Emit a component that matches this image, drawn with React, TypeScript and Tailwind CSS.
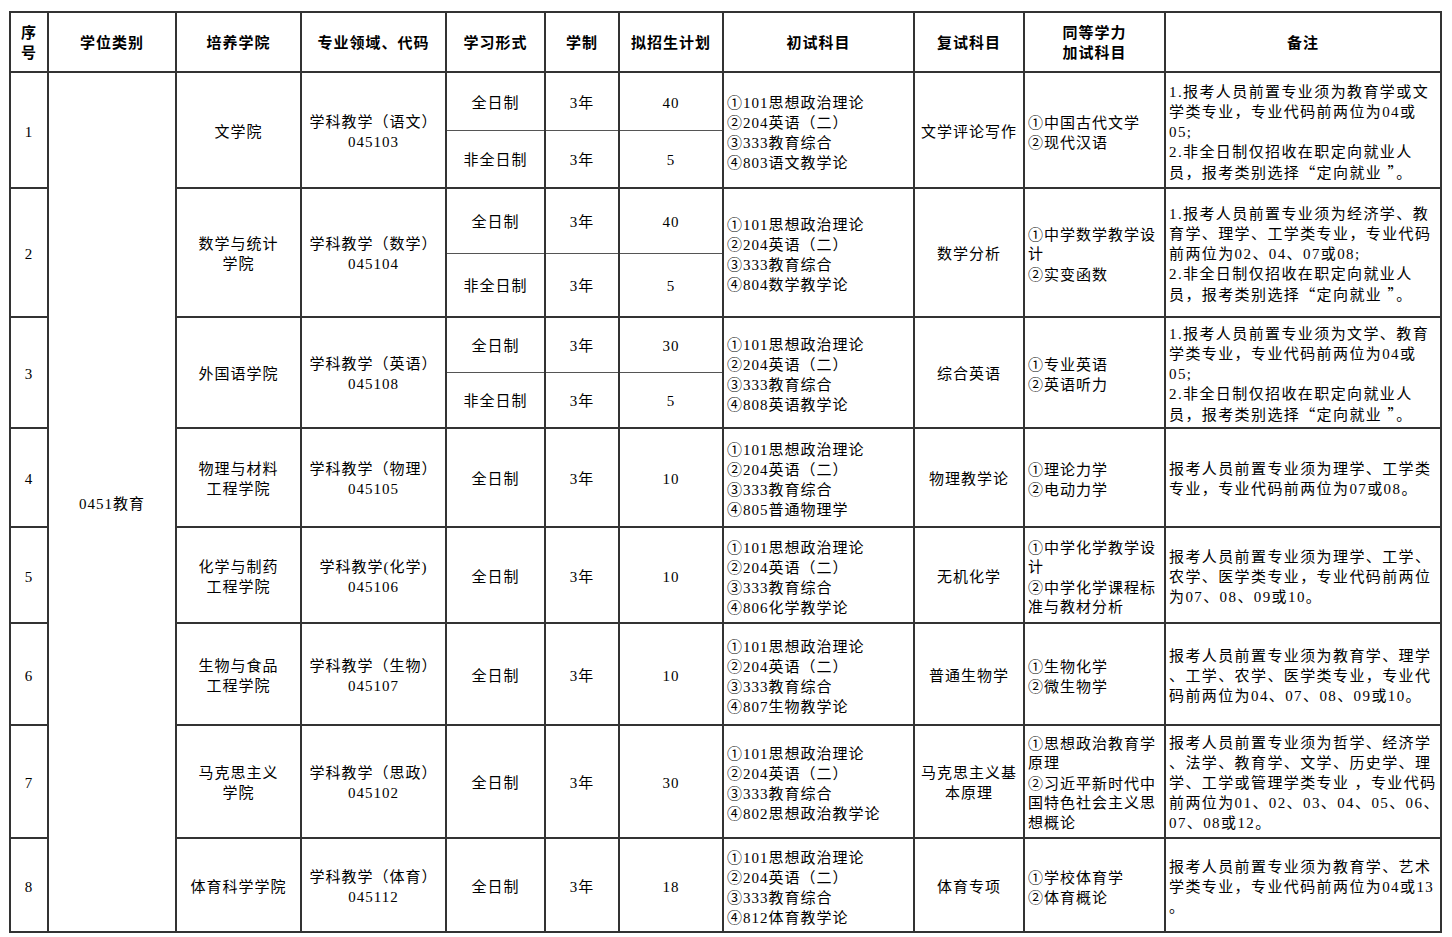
const font = { fontFamily: '"Liberation Serif", "Noto Sans CJK SC", serif' };

type Row = {
  no: string;
  college: string[];
  major: string[];
  forms: { form: string; years: string; plan: string }[];
  heights: number[];
  exam: string[];
  retest: string[];
  extra: string[];
  note: string[];
};

const exam = (code: string, subject: string) => [
  "①101思想政治理论",
  "②204英语（二）",
  "③333教育综合",
  `④${code}${subject}`,
];

const noteTail = ["2.非全日制仅招收在职定向就业人", "员，报考类别选择“定向就业 ”。"];

const rows: Row[] = [
  {
    no: "1",
    college: ["文学院"],
    major: ["学科教学（语文）", "045103"],
    forms: [
      { form: "全日制", years: "3年", plan: "40" },
      { form: "非全日制", years: "3年", plan: "5" },
    ],
    heights: [58, 58],
    exam: exam("803", "语文教学论"),
    retest: ["文学评论写作"],
    extra: ["①中国古代文学", "②现代汉语"],
    note: ["1.报考人员前置专业须为教育学或文", "学类专业，专业代码前两位为04或", "05;", ...noteTail],
  },
  {
    no: "2",
    college: ["数学与统计", "学院"],
    major: ["学科教学（数学）", "045104"],
    forms: [
      { form: "全日制", years: "3年", plan: "40" },
      { form: "非全日制", years: "3年", plan: "5" },
    ],
    heights: [65, 64],
    exam: exam("804", "数学教学论"),
    retest: ["数学分析"],
    extra: ["①中学数学教学设", "计", "②实变函数"],
    note: ["1.报考人员前置专业须为经济学、教", "育学、理学、工学类专业，专业代码", "前两位为02、04、07或08;", ...noteTail],
  },
  {
    no: "3",
    college: ["外国语学院"],
    major: ["学科教学（英语）", "045108"],
    forms: [
      { form: "全日制", years: "3年", plan: "30" },
      { form: "非全日制", years: "3年", plan: "5" },
    ],
    heights: [55, 56],
    exam: exam("808", "英语教学论"),
    retest: ["综合英语"],
    extra: ["①专业英语", "②英语听力"],
    note: ["1.报考人员前置专业须为文学、教育", "学类专业，专业代码前两位为04或", "05;", ...noteTail],
  },
  {
    no: "4",
    college: ["物理与材料", "工程学院"],
    major: ["学科教学（物理）", "045105"],
    forms: [{ form: "全日制", years: "3年", plan: "10" }],
    heights: [99],
    exam: exam("805", "普通物理学"),
    retest: ["物理教学论"],
    extra: ["①理论力学", "②电动力学"],
    note: ["报考人员前置专业须为理学、工学类", "专业，专业代码前两位为07或08。"],
  },
  {
    no: "5",
    college: ["化学与制药", "工程学院"],
    major: ["学科教学(化学)", "045106"],
    forms: [{ form: "全日制", years: "3年", plan: "10" }],
    heights: [96],
    exam: exam("806", "化学教学论"),
    retest: ["无机化学"],
    extra: ["①中学化学教学设", "计", "②中学化学课程标", "准与教材分析"],
    note: ["报考人员前置专业须为理学、工学、", "农学、医学类专业，专业代码前两位", "为07、08、09或10。"],
  },
  {
    no: "6",
    college: ["生物与食品", "工程学院"],
    major: ["学科教学（生物）", "045107"],
    forms: [{ form: "全日制", years: "3年", plan: "10" }],
    heights: [102],
    exam: exam("807", "生物教学论"),
    retest: ["普通生物学"],
    extra: ["①生物化学", "②微生物学"],
    note: ["报考人员前置专业须为教育学、理学", "、工学、农学、医学类专业，专业代", "码前两位为04、07、08、09或10。"],
  },
  {
    no: "7",
    college: ["马克思主义", "学院"],
    major: ["学科教学（思政）", "045102"],
    forms: [{ form: "全日制", years: "3年", plan: "30" }],
    heights: [113],
    exam: exam("802", "思想政治教学论"),
    retest: ["马克思主义基", "本原理"],
    extra: ["①思想政治教育学", "原理", "②习近平新时代中", "国特色社会主义思", "想概论"],
    note: [
      "报考人员前置专业须为哲学、经济学",
      "、法学、教育学、文学、历史学、理",
      "学、工学或管理学类专业 ，专业代码",
      "前两位为01、02、03、04、05、06、",
      "07、08或12。",
    ],
  },
  {
    no: "8",
    college: ["体育科学学院"],
    major: ["学科教学（体育）", "045112"],
    forms: [{ form: "全日制", years: "3年", plan: "18" }],
    heights: [94],
    exam: exam("812", "体育教学论"),
    retest: ["体育专项"],
    extra: ["①学校体育学", "②体育概论"],
    note: ["报考人员前置专业须为教育学、艺术", "学类专业，专业代码前两位为04或13", "。"],
  },
];

const widths = [38, 128, 125, 145, 99, 74, 104, 191, 110, 141, 276];

// circled digits and curly quotes are full width in the original, take them from the CJK font
const wide = /([①②③④“”])/;

const Text = ({ s }: { s: string }) => (
  <>
    {s.split(wide).map((part, i) =>
      wide.test(part) ? (
        <span key={i} className="font-['Noto_Sans_CJK_SC']">
          {part}
        </span>
      ) : (
        part
      )
    )}
  </>
);

const Lines = ({ lines }: { lines: string[] }) => (
  <>
    {lines.map((l, i) => (
      <div key={i} className="whitespace-nowrap h-[20px]">
        <Text s={l} />
      </div>
    ))}
  </>
);

const head = "border-2 border-[#333] align-middle text-center p-0";
const cell = "border-2 border-[#333] align-middle text-center px-0 pt-[3px] pb-0";
const left = "border-2 border-[#333] align-middle text-left pl-[3px] pr-0 pt-[3px] pb-0";

export default function App() {
  const totalRows = rows.reduce((n, r) => n + r.forms.length, 0);
  return (
    <div className="bg-white w-[1452px] h-[937px] pt-[11px] pl-[9px] overflow-hidden text-black" style={font}>
      <table className="table-fixed border-collapse w-[1433px] text-[15px] leading-[20px] tracking-[1px]">
        <colgroup>
          {widths.map((w, i) => (
            <col key={i} style={{ width: w }} />
          ))}
        </colgroup>
        <thead>
          <tr className="h-[60px] font-bold" style={{ fontFamily: '"Noto Sans CJK SC", sans-serif' }}>
            <th className={head}>
              <div>序</div>
              <div>号</div>
            </th>
            <th className={head}>学位类别</th>
            <th className={head}>培养学院</th>
            <th className={head}>专业领域、代码</th>
            <th className={head}>学习形式</th>
            <th className={head}>学制</th>
            <th className={head}>拟招生计划</th>
            <th className={head}>初试科目</th>
            <th className={head}>复试科目</th>
            <th className={head}>
              <div>同等学力</div>
              <div>加试科目</div>
            </th>
            <th className={head}>备注</th>
          </tr>
        </thead>
        <tbody>
          {rows.map((r, ri) =>
            r.forms.map((f, fi) => {
              const span = r.forms.length;
              const sub = span > 1 ? (fi === 0 ? "border-b-[1px] border-b-[#555]" : "border-t-[1px] border-t-[#555]") : "";
              return (
                <tr key={`${ri}-${fi}`} style={{ height: r.heights[fi] }}>
                  {fi === 0 && (
                    <>
                      <td rowSpan={span} className={cell}>
                        {r.no}
                      </td>
                      {ri === 0 && (
                        <td rowSpan={totalRows} className={cell}>
                          0451教育
                        </td>
                      )}
                      <td rowSpan={span} className={cell}>
                        <Lines lines={r.college} />
                      </td>
                      <td rowSpan={span} className={cell}>
                        <Lines lines={r.major} />
                      </td>
                    </>
                  )}
                  <td className={`${cell} ${sub}`}>{f.form}</td>
                  <td className={`${cell} ${sub}`}>{f.years}</td>
                  <td className={`${cell} ${sub}`}>{f.plan}</td>
                  {fi === 0 && (
                    <>
                      <td rowSpan={span} className={left}>
                        <Lines lines={r.exam} />
                      </td>
                      <td rowSpan={span} className={cell}>
                        <Lines lines={r.retest} />
                      </td>
                      <td rowSpan={span} className={left}>
                        <Lines lines={r.extra} />
                      </td>
                      <td rowSpan={span} className={`${left} tracking-[1.4px]`}>
                        <Lines lines={r.note} />
                      </td>
                    </>
                  )}
                </tr>
              );
            })
          )}
        </tbody>
      </table>
    </div>
  );
}
